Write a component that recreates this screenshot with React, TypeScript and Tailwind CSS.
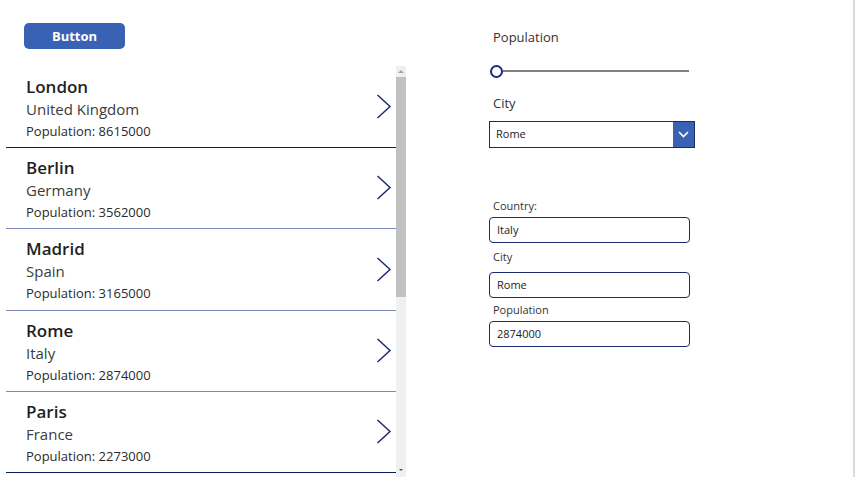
import React from "react";

const rows = [
  { city: "London", country: "United Kingdom", pop: "8615000", h: "h-[81px]", border: "border-[#0e1b5e]" },
  { city: "Berlin", country: "Germany", pop: "3562000", h: "h-[81px]", border: "border-[#7d87b9]" },
  { city: "Madrid", country: "Spain", pop: "3165000", h: "h-[82px]", border: "border-[#7d87b9]" },
  { city: "Rome", country: "Italy", pop: "2874000", h: "h-[81px]", border: "border-[#7d87b9]" },
  { city: "Paris", country: "France", pop: "2273000", h: "h-[81px]", border: "border-[#0e1b5e]" },
];

function Chevron() {
  return (
    <svg width="16" height="26" viewBox="0 0 16 26" className="shrink-0">
      <polyline points="1.5,1 14,12.5 1.5,24" fill="none" stroke="#1b2a7c" strokeWidth="1.5" />
    </svg>
  );
}

function Field({ value }: { value: string }) {
  return (
    <div className="flex h-[26px] w-[201px] items-center rounded-[4px] border border-[#1b2a6e] pl-[7px] text-[11px] text-[#222]">
      {value}
    </div>
  );
}

export default function App() {
  return (
    <div className="flex h-[477px] w-[856px] overflow-hidden bg-white font-['Open_Sans',sans-serif] text-[#222]">
      <div className="flex w-[406px] shrink-0 flex-col pl-[6px]">
        <div className="h-[66px] shrink-0 pl-[18px] pt-[23px]">
          <button className="flex h-[26px] w-[101px] items-center justify-center rounded-[5px] bg-[#3a62b4] pt-[2px] text-[13px] font-bold text-white">
            Button
          </button>
        </div>
        <div className="flex min-h-0 flex-1">
          <div className="w-[390px] pt-[1px]">
            {rows.map((r) => (
              <div key={r.city} className={`flex ${r.h} items-center border-b ${r.border} pr-[4px]`}>
                <div className="flex-1 pl-[20px] pt-[3px]">
                  <div className="text-[17px] font-semibold leading-[22px] text-[#1f1f1f]">{r.city}</div>
                  <div className="text-[15px] leading-[22px] text-[#3c3c3c]">{r.country}</div>
                  <div className="text-[13px] leading-[22px] text-[#2a2a2a]">Population: {r.pop}</div>
                </div>
                <Chevron />
              </div>
            ))}
          </div>
          <div className="flex w-[10px] flex-col bg-[#f0f0f0]">
            <div className="flex h-[11px] items-center justify-center">
              <div className="h-0 w-0 border-x-[3px] border-b-[3px] border-x-transparent border-b-[#a3a3a3]" />
            </div>
            <div className="h-[220px] w-[10px] bg-[#c1c1c1]" />
            <div className="flex-1" />
            <div className="flex h-[8px] items-start justify-center">
              <div className="h-0 w-0 border-x-[2px] border-t-[2px] border-x-transparent border-t-[#555]" />
            </div>
          </div>
        </div>
      </div>

      <div className="ml-[83px] flex w-[210px] flex-col pt-[28px]">
        <div className="pl-[4px] text-[13px] leading-[18px] text-[#333]">Population</div>
        <div className="mt-[18px] flex h-[14px] w-[200px] items-center pl-[1px]">
          <div className="h-[13px] w-[13px] shrink-0 rounded-full border-2 border-[#1b2a7c] bg-white" />
          <div className="h-[1.5px] flex-1 bg-[#808080]" />
        </div>
        <div className="mt-[16px] pl-[4px] text-[13px] leading-[18px] text-[#333]">City</div>
        <div className="mt-[9px] flex h-[27px] w-[206px] border border-[#1b2a6e]">
          <div className="flex flex-1 items-center pl-[6px] text-[11px] text-[#222]">Rome</div>
          <div className="flex w-[21px] items-center justify-center bg-[#3a62b4]">
            <svg width="11" height="7" viewBox="0 0 11 7">
              <polyline points="1,1 5.5,5.5 10,1" fill="none" stroke="white" strokeWidth="1.6" />
            </svg>
          </div>
        </div>
        <div className="mt-[50px] pl-[4px] text-[11px] leading-[16px] text-[#333]">Country:</div>
        <div className="mt-[3px]">
          <Field value="Italy" />
        </div>
        <div className="mt-[6px] pl-[4px] text-[11px] leading-[16px] text-[#333]">City</div>
        <div className="mt-[7px]">
          <Field value="Rome" />
        </div>
        <div className="mt-[4px] pl-[4px] text-[11px] leading-[16px] text-[#333]">Population</div>
        <div className="mt-[3px]">
          <Field value="2874000" />
        </div>
      </div>

      <div className="ml-auto mr-[1px] w-[2px] bg-[#dadada]" />
    </div>
  );
}
